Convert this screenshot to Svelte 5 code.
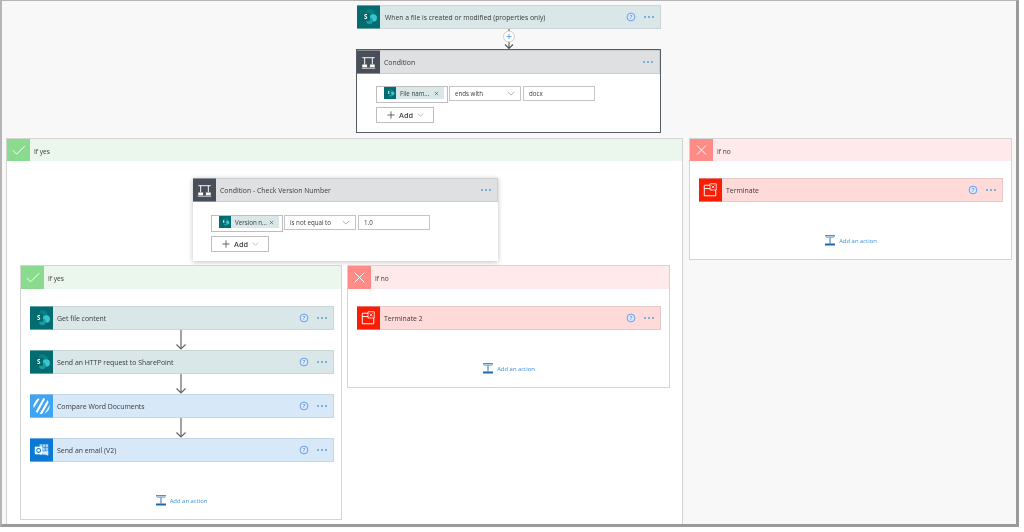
<script>
  const innerSteps = [
    { kind: "sp", title: "Get file content" },
    { kind: "sp", title: "Send an HTTP request to SharePoint" },
    { kind: "compare", title: "Compare Word Documents" },
    { kind: "outlook", title: "Send an email (V2)" },
  ];
</script>

{#snippet spIcon()}
  <svg viewBox="0 0 24 24" class="fill">
    <rect width="24" height="24" fill="#036c70" />
    <circle cx="13.500" cy="9" r="5" fill="#0a8185" />
    <circle cx="17" cy="13" r="3.800" fill="#37c6d0" />
    <circle cx="13" cy="16" r="3.500" fill="#1a9ba1" />
    <rect x="5" y="7.500" width="8.500" height="8.500" rx="1" fill="#04686b" />
    <text x="9.200" y="14.200" text-anchor="middle" class="s">S</text>
  </svg>
{/snippet}

{#snippet stepIcon(kind)}
  {#if kind === "sp"}
    {@render spIcon()}
  {:else if kind === "condition"}
    <svg viewBox="0 0 24 24" class="fill">
      <rect width="24" height="24" fill="#484f58" />
      <path d="M5.500 7.500h13M8 7.500v7M16 7.500v7" stroke="#fff" stroke-width="1" fill="none" />
      <path d="M5.500 14.500h5v3h-5zM13.500 14.500h5v3h-5z" fill="#fff" />
      <path d="M5 18.500h14" stroke="#fff" stroke-width=".8" />
    </svg>
  {:else if kind === "terminate"}
    <svg viewBox="0 0 24 24" class="fill">
      <rect width="24" height="24" fill="#f81d04" />
      <path d="M11.500 7H5.500v11h12v-6M5.500 10.500h6" stroke="#fff" stroke-width="1" fill="none" />
      <path d="M11.500 5.500h6.500V12h-6.500zM13.300 7.300l2.900 2.900M16.200 7.300l-2.900 2.900" stroke="#fff" stroke-width=".8" fill="none" />
    </svg>
  {:else if kind === "compare"}
    <svg viewBox="0 0 24 24" class="fill">
      <rect width="24" height="24" fill="#3fa4f2" />
      <clipPath id="compare-clip"><circle cx="12" cy="12" r="8.500" /></clipPath>
      <g clip-path="url(#compare-clip)">
        <path d="M2 15l7-11M6 20L15 4M11 21l9-16M16 21l7-12" stroke="#fff" stroke-width="2.300" fill="none" />
      </g>
    </svg>
  {:else if kind === "outlook"}
    <svg viewBox="0 0 24 24" class="fill">
      <rect width="24" height="24" fill="#0a78d4" />
      <rect x="10" y="6" width="9" height="11" fill="#a8d4f4" />
      <path d="M10 9.500h9M10 13h9M13 6v11M16 6v11" stroke="#0a78d4" stroke-width=".6" />
      <path d="M10 14l9 4v-5z" fill="#d4e9f9" />
      <rect x="5" y="8.500" width="8" height="8" fill="#fff" />
      <circle cx="9" cy="12.500" r="2" fill="none" stroke="#0a78d4" stroke-width="1.100" />
    </svg>
  {/if}
{/snippet}

{#snippet card(kind, title, tone, help = true)}
  <div class="card {tone}">
    <span class="icon">{@render stepIcon(kind)}</span>
    <span class="title">{title}</span>
    {#if help}
      <svg class="help" viewBox="0 0 10 10">
        <circle cx="5" cy="5" r="3.900" fill="#dbe8fb" stroke="#5b96ea" stroke-width=".9" />
        <text x="5" y="7" text-anchor="middle">?</text>
      </svg>
    {/if}
    <span class="dots"><i></i><i></i><i></i></span>
  </div>
{/snippet}

{#snippet conditionBody(token, op, value)}
  <div class="row">
    <div class="token">
      <span class="chip-icon">{@render spIcon()}</span>
      <span class="chip">
        <span class="chip-text">{token}</span>
        <svg class="chip-x" viewBox="0 0 6 6"><path d="M1 1l4 4M5 1L1 5" stroke="#555" stroke-width=".8" /></svg>
      </span>
    </div>
    <div class="select">
      <span>{op}</span>
      <svg viewBox="0 0 10 6"><path d="M1 1l4 4 4-4" stroke="#888" stroke-width=".8" fill="none" /></svg>
    </div>
    <div class="input">{value}</div>
  </div>
  <div class="add">
    <svg class="add-plus" viewBox="0 0 10 10"><path d="M5 .5v9M.5 5h9" stroke="#444" stroke-width="1" /></svg>
    <span>Add</span>
    <svg class="add-caret" viewBox="0 0 10 6"><path d="M1 1l4 4 4-4" stroke="#888" stroke-width=".8" fill="none" /></svg>
  </div>
{/snippet}

{#snippet branchHead(yes)}
  <div class="branch-head" class:yes class:no={!yes}>
    <span class="branch-icon">
      {#if yes}
        <svg viewBox="0 0 24 24"><path d="M6 12.500l4 4 9-9" stroke="#fff" stroke-width="1" fill="none" /></svg>
      {:else}
        <svg viewBox="0 0 24 24"><path d="M7 7l10 10M17 7L7 17" stroke="#fff" stroke-width="1" fill="none" /></svg>
      {/if}
    </span>
    <span class="branch-label">{yes ? "If yes" : "If no"}</span>
  </div>
{/snippet}

{#snippet addAction()}
  <div class="add-action">
    <svg viewBox="0 0 12 11">
      <path d="M1 .8h10" stroke="#2f74b8" stroke-width="1.200" />
      <path d="M2 2.500h8" stroke="#9cc3e6" stroke-width="1" />
      <path d="M6 2.500v6" stroke="#2f74b8" stroke-width="1" />
      <path d="M1 9.500h10" stroke="#1f66ad" stroke-width="2" />
    </svg>
    <span>Add an action</span>
  </div>
{/snippet}

{#snippet arrow()}
  <svg class="arrow" viewBox="0 0 12 20">
    <path d="M6 0v19M1.500 14.500L6 19l4.500-4.500" stroke="#666" stroke-width="1.200" fill="none" />
  </svg>
{/snippet}

<div class="canvas">
  <div class="top">
    <div class="trigger">
      {@render card("sp", "When a file is created or modified (properties only)", "teal")}
    </div>
    <svg class="link" viewBox="0 0 14 21">
      <path d="M7 0v19.500M3 15.500L7 19.500l4-4" stroke="#555" stroke-width="1.100" fill="none" />
      <circle cx="7" cy="7.500" r="5.500" fill="#fff" stroke="#bbb" stroke-width=".7" />
      <path d="M7 5v5M4.500 7.500h5" stroke="#4a90d9" stroke-width=".8" />
    </svg>
    <div class="condition selected">
      {@render card("condition", "Condition", "gray", false)}
      <div class="cond-body">
        {@render conditionBody("File nam...", "ends with", "docx")}
      </div>
    </div>
  </div>

  <div class="branches">
    <section class="branch outer-yes">
      {@render branchHead(true)}
      <div class="condition inner-condition">
        {@render card("condition", "Condition - Check Version Number", "gray", false)}
        <div class="cond-body">
          {@render conditionBody("Version n...", "is not equal to", "1.0")}
        </div>
      </div>

      <div class="inner-branches">
        <section class="branch inner-yes">
          {@render branchHead(true)}
          <div class="steps">
            {#each innerSteps as step, i}
              {#if i > 0}{@render arrow()}{/if}
              {@render card(step.kind, step.title, step.kind === "sp" ? "teal" : "blue")}
            {/each}
          </div>
          <div class="action-gap">{@render addAction()}</div>
        </section>
        <section class="branch inner-no">
          {@render branchHead(false)}
          <div class="steps">
            {@render card("terminate", "Terminate 2", "red")}
          </div>
          <div class="action-gap">{@render addAction()}</div>
        </section>
      </div>
    </section>

    <section class="branch outer-no">
      {@render branchHead(false)}
      <div class="steps">
        {@render card("terminate", "Terminate", "red")}
      </div>
      <div class="action-gap">{@render addAction()}</div>
    </section>
  </div>
</div>

<style>
  :global(body) {
    background: #fff;
  }
  .canvas {
    width: 1014px;
    height: 523px;
    box-sizing: content-box;
    background: #f8f8f8;
    border-top: 1px solid #b5b5b5;
    border-left: 2px solid #b5b5b5;
    border-right: 3px solid #9a9a9a;
    border-bottom: 3px solid #9a9a9a;
    font-family: "Open Sans", "Noto Sans", sans-serif;
    color: #3a3a3a;
    display: flex;
    flex-direction: column;
    filter: blur(0.45px);
    overflow: hidden;
  }
  .top {
    width: 305px;
    margin: 4px 0 0 354px;
    display: flex;
    flex-direction: column;
  }
  .trigger {
    width: 304px;
    margin-left: 1px;
  }
  .trigger .title {
    margin-left: 5px;
    font-size: 6.800px;
  }
  .card {
    height: 24px;
    display: flex;
    align-items: center;
    font-size: 6.900px;
    box-shadow: inset 0 0 0 1px rgba(120, 130, 130, 0.18);
  }
  .teal { background: #d9e7e8; }
  .gray { background: #dfe0e2; }
  .blue { background: #d7e8f8; }
  .red { background: #fedad8; }
  .icon {
    width: 23px;
    height: 24px;
    flex: none;
  }
  .fill {
    display: block;
    width: 100%;
    height: 100%;
  }
  .s {
    font: bold 6.500px "Open Sans", sans-serif;
    fill: #fff;
  }
  .title {
    flex: 1;
    margin-left: 4px;
  }
  .help {
    width: 10px;
    height: 10px;
    margin-right: 8px;
  }
  .help text {
    font: 6px "Open Sans", sans-serif;
    fill: #3b78d8;
  }
  .dots {
    display: flex;
    gap: 2px;
    margin-right: 7px;
    width: 10px;
  }
  .dots i {
    width: 2px;
    height: 2px;
    border-radius: 50%;
    background: #5a9fd8;
  }
  .link {
    display: block;
    width: 14px;
    height: 21px;
    margin-left: 146px;
  }
  .condition {
    width: 305px;
    background: #fff;
  }
  .selected {
    box-sizing: border-box;
    height: 84px;
    border: 1px solid #555c64;
    margin-top: -1px;
  }
  .selected .cond-body {
    padding: 12px 19px 0;
  }
  .cond-body {
    padding: 13px 18px 0;
    display: flex;
    flex-direction: column;
  }
  .row {
    display: flex;
    gap: 1px;
    height: 16px;
    font-size: 6.200px;
  }
  .token {
    width: 72px;
    height: 17px;
    box-sizing: border-box;
    border: 1px solid #bdbdbd;
    display: flex;
    padding-left: 7px;
    flex: none;
  }
  .chip-icon {
    width: 12px;
    height: 12px;
    flex: none;
  }
  .chip {
    width: 48px;
    height: 12px;
    background: #d9e7e8;
    display: flex;
    align-items: center;
    justify-content: space-between;
    padding: 0 5px 0 4px;
    box-sizing: border-box;
  }
  .chip-x {
    width: 5px;
    height: 5px;
  }
  .select,
  .input {
    height: 15px;
    box-sizing: border-box;
    border: 1px solid #c4c4c4;
    background: #fff;
    display: flex;
    align-items: center;
    padding: 0 5px;
    flex: none;
  }
  .select {
    width: 72px;
    justify-content: space-between;
  }
  .select svg {
    width: 8px;
    height: 5px;
  }
  .input {
    width: 72px;
    margin-left: 1px;
  }
  .add {
    width: 58px;
    height: 16px;
    box-sizing: border-box;
    margin-top: 5px;
    border: 1px solid #bdbdbd;
    display: flex;
    align-items: center;
    padding-left: 10px;
    font-size: 7.400px;
    font-weight: 600;
    color: #444;
  }
  .add-plus {
    width: 8px;
    height: 8px;
    margin-right: 4px;
  }
  .add-caret {
    width: 7px;
    height: 4px;
    margin-left: 4px;
  }
  .branches {
    display: flex;
    gap: 6px;
    margin: 5px 0 0 4px;
    align-items: flex-start;
  }
  .branch {
    background: #fff;
    box-sizing: border-box;
    border: 1px solid #d4d4d4;
    display: flex;
    flex-direction: column;
  }
  .branch-head {
    height: 22px;
    display: flex;
    align-items: center;
    gap: 4px;
    font-size: 6.600px;
    flex: none;
  }
  .branch-label {
    padding-top: 2px;
  }
  .branch-head.yes { background: #ebf6ed; }
  .branch-head.no { background: #feeaea; }
  .branch-icon {
    width: 23px;
    height: 100%;
  }
  .branch-icon svg {
    display: block;
    width: 23px;
    height: 100%;
  }
  .yes .branch-icon { background: #8bdb8f; }
  .no .branch-icon { background: #ff8b86; }
  .outer-yes {
    width: 677px;
    height: 390px;
  }
  .outer-no {
    width: 323px;
    height: 122px;
  }
  .inner-condition {
    margin: 17px 0 0 186px;
    box-shadow: 0 1px 5px rgba(0, 0, 0, 0.25);
    height: 83px;
  }
  .inner-branches {
    display: flex;
    gap: 5px;
    margin: 4px 0 0 13px;
    align-items: flex-start;
  }
  .inner-branches .branch-head {
    height: 23px;
  }
  .inner-yes {
    width: 322px;
    height: 255px;
  }
  .inner-no {
    width: 323px;
    height: 123px;
  }
  .steps {
    width: 304px;
    margin: 17px 0 0 9px;
    display: flex;
    flex-direction: column;
  }
  .arrow {
    display: block;
    width: 12px;
    height: 20px;
    margin-left: 145px;
  }
  .action-gap {
    margin-top: 33px;
    display: flex;
    justify-content: center;
  }
  .add-action {
    display: flex;
    align-items: center;
    gap: 3px;
    font-size: 5.900px;
    color: #3f8fd6;
  }
  .add-action svg {
    width: 12px;
    height: 11px;
  }
</style>
